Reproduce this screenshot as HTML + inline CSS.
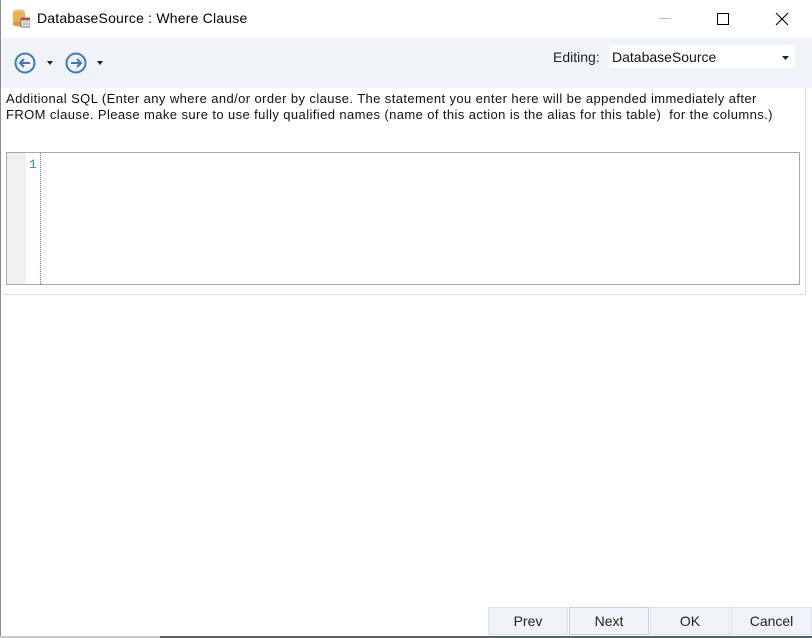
<!DOCTYPE html>
<html><head><style>
*{margin:0;padding:0;box-sizing:border-box}
body{width:812px;height:638px;overflow:hidden;background:#fff;font-family:"Liberation Sans",Arial,sans-serif;position:relative}
.abs{position:absolute}
</style></head><body>
<div class="abs" style="left:0;top:0;width:1px;height:638px;background:#8a8a8a"></div>
<div class="abs" style="left:12px;top:8px;width:16px;height:18px">
<svg width="18" height="20" viewBox="0 0 18 20"><ellipse cx="7" cy="4" rx="6" ry="2.5" fill="#f0c060"/><rect x="1" y="4" width="12" height="12" fill="#e8b050"/><ellipse cx="7" cy="16" rx="6" ry="2.5" fill="#d89a40"/><rect x="9" y="10" width="9" height="9" fill="#fff" stroke="#777"/><path d="M9 13h9M9 16h9M12 10v9M15 10v9" stroke="#999" stroke-width=".8"/><rect x="9" y="10" width="9" height="2" fill="#d04040"/></svg></div>
<div class="abs" style="left:37px;top:10px;font-size:14px;color:#000;letter-spacing:0.2px">DatabaseSource : Where Clause</div>
<div class="abs" style="left:659px;top:18px;width:12px;height:1px;background:#bbb"></div>
<div class="abs" style="left:717px;top:13px;width:12px;height:12px;border:1px solid #000"></div>
<svg class="abs" style="left:775px;top:12px" width="14" height="14"><path d="M1 1L13 13M13 1L1 13" stroke="#000" stroke-width="1.1"/></svg>
<div class="abs" style="left:1px;top:38px;width:811px;height:50px;background:#f0f4f8"></div>
<svg class="abs" style="left:14px;top:52px" width="22" height="22"><circle cx="11" cy="11" r="9.5" fill="none" stroke="#3a78c0" stroke-width="2"/><path d="M16 11H6M10 7L6 11L10 15" fill="none" stroke="#3a78c0" stroke-width="2"/></svg>
<svg class="abs" style="left:47px;top:61px" width="6" height="4"><path d="M0 0h6L3 4z" fill="#222"/></svg>
<svg class="abs" style="left:65px;top:52px" width="22" height="22"><circle cx="11" cy="11" r="9.5" fill="none" stroke="#3a78c0" stroke-width="2"/><path d="M6 11H16M12 7L16 11L12 15" fill="none" stroke="#3a78c0" stroke-width="2"/></svg>
<svg class="abs" style="left:97px;top:61px" width="6" height="4"><path d="M0 0h6L3 4z" fill="#222"/></svg>
<div class="abs" style="left:553px;top:49px;font-size:14px;color:#222">Editing:</div>
<div class="abs" style="left:609px;top:45px;width:186px;height:23px;background:#fff"></div>
<div class="abs" style="left:612px;top:49px;font-size:14px;color:#111">DatabaseSource</div>
<svg class="abs" style="left:782px;top:56px" width="7" height="4"><path d="M0 0h7L3.5 4z" fill="#222"/></svg>
<div class="abs" style="left:6px;top:91px;font-size:13px;letter-spacing:0.4px;line-height:16px;color:#111;width:800px;white-space:nowrap">Additional SQL (Enter any where and/or order by clause. The statement you enter here will be appended immediately after<br>FROM clause. Please make sure to use fully qualified names (name of this action is the alias for this table)&nbsp; for the columns.)</div>
<div class="abs" style="left:2px;top:88px;width:804px;height:207px;border-right:1px solid #dcdfe4;border-bottom:1px solid #dcdfe4"></div>
<div class="abs" style="left:6px;top:152px;width:794px;height:133px;border:1px solid #a8a8a8;background:#fff"></div>
<div class="abs" style="left:7px;top:153px;width:19px;height:131px;background:#f0f0f0"></div>
<div class="abs" style="left:29px;top:157px;font-family:'Liberation Mono',monospace;font-size:13px;color:#2b91af">1</div>
<div class="abs" style="left:40px;top:153px;width:1px;height:131px;background:repeating-linear-gradient(#2b91af 0 1px,transparent 1px 2px)"></div>
<div class="abs" style="left:488px;top:607px;width:80px;height:28px;background:#f0f4f8;border:1px solid #dde2e8;font-size:14px;text-align:center;line-height:27px;color:#222">Prev</div>
<div class="abs" style="left:569px;top:607px;width:80px;height:28px;background:#f0f4f8;border:1px solid #ccd;font-size:14px;text-align:center;line-height:27px;color:#222">Next</div>
<div class="abs" style="left:650px;top:607px;width:80px;height:28px;background:#f0f4f8;border:1px solid #dde2e8;font-size:14px;text-align:center;line-height:27px;color:#222">OK</div>
<div class="abs" style="left:731px;top:607px;width:81px;height:28px;background:#f0f4f8;border:1px solid #dde2e8;font-size:14px;text-align:center;line-height:27px;color:#222">Cancel</div>
<div class="abs" style="left:0;top:636px;width:160px;height:2px;background:#c8c8c8"></div>
<div class="abs" style="left:160px;top:636px;width:652px;height:2px;background:#5a6068"></div>
</body></html>
